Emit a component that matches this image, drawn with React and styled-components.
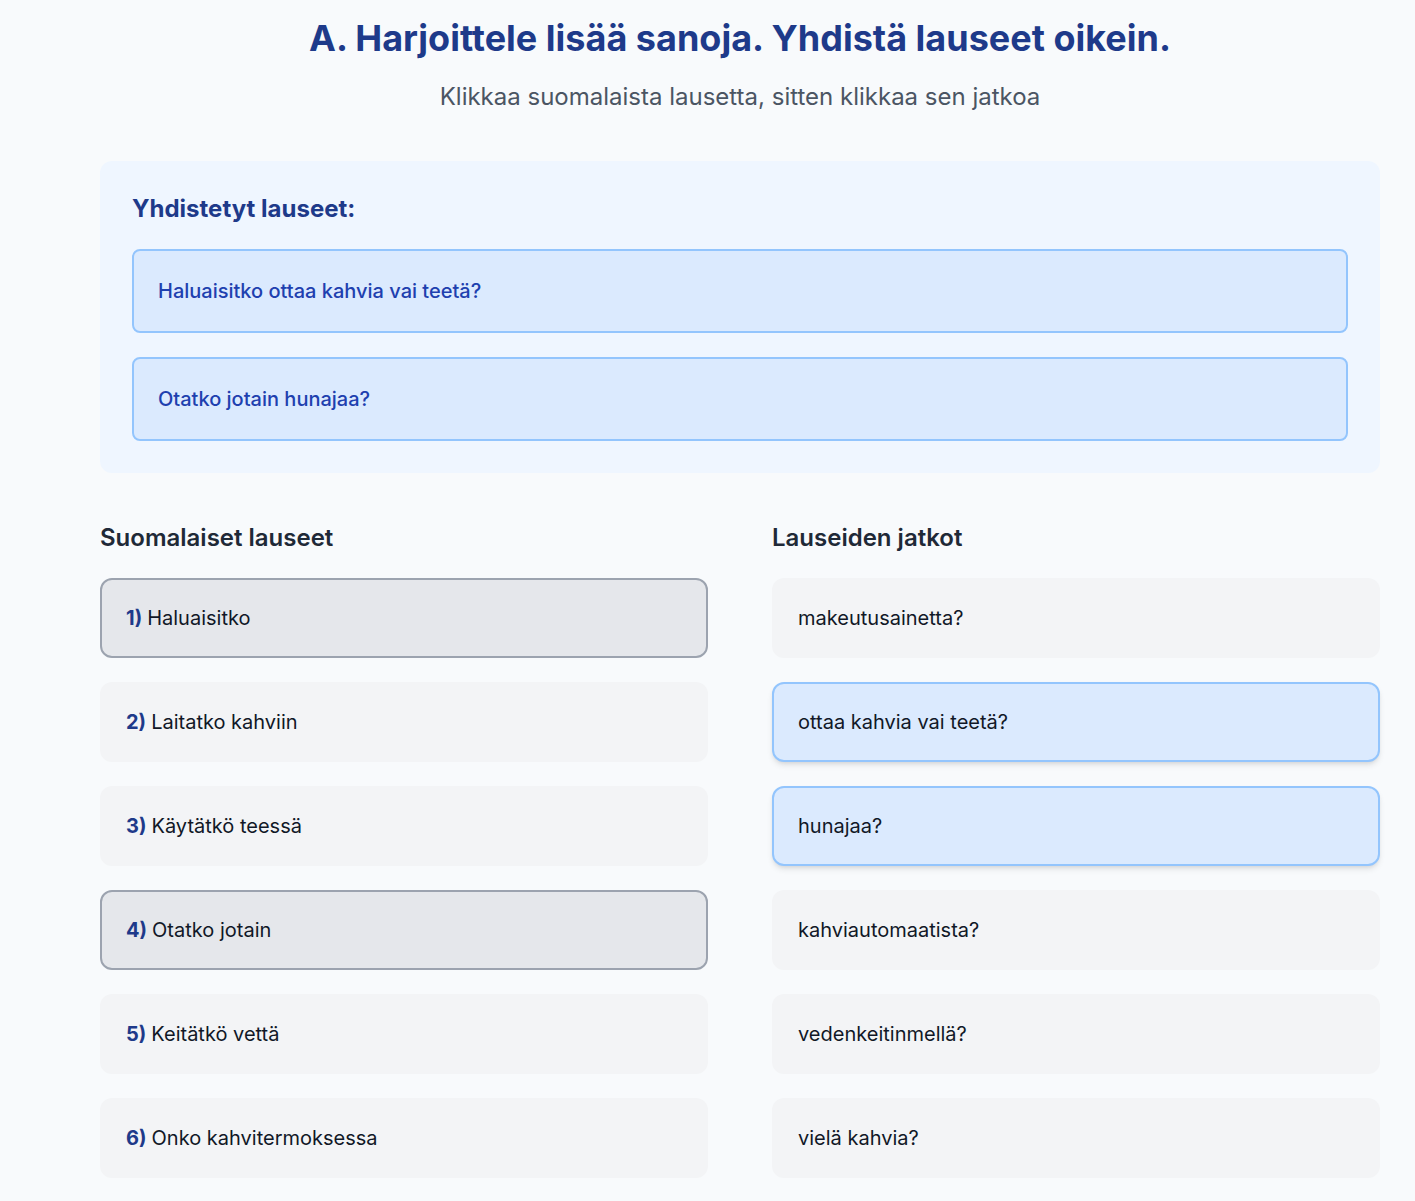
import React from "react";
import styled, { createGlobalStyle } from "styled-components";

const GlobalStyle = createGlobalStyle`
  html, body {
    margin: 0;
    padding: 0;
    background-color: #f8fafc;
    font-family: Inter, "Noto Sans", sans-serif;
  }
`;

const Page = styled.div`
  width: 1280px;
  padding: 18px 0 40px 100px;
`;

const Title = styled.h1`
  margin: 0;
  font-size: 36px;
  line-height: 40px;
  font-weight: 700;
  color: #1e3a8a;
  text-align: center;
`;

const Subtitle = styled.p`
  margin: 23px 0 48px;
  font-size: 24px;
  line-height: 32px;
  color: #4b5563;
  text-align: center;
`;

const MatchedBox = styled.section`
  background-color: #eff6ff;
  border-radius: 12px;
  padding: 32px;
  margin-bottom: 49px;
`;

const BoxHeading = styled.h2`
  margin: 0 0 24px;
  font-size: 24px;
  line-height: 32px;
  font-weight: 700;
  color: #1e3a8a;
`;

const MatchedList = styled.div`
  display: flex;
  flex-direction: column;
  gap: 24px;
`;

const MatchedItem = styled.div`
  background-color: #dbeafe;
  border: 2px solid #93c5fd;
  border-radius: 8px;
  padding: 26px 24px;
  font-size: 20px;
  line-height: 28px;
  font-weight: 500;
  color: #1e40af;
`;

const Columns = styled.div`
  display: grid;
  grid-template-columns: 1fr 1fr;
  gap: 64px;
`;

const ColumnHeading = styled.h3`
  margin: 0 0 24px;
  font-size: 24px;
  line-height: 32px;
  font-weight: 600;
  color: #1f2937;
`;

const ItemList = styled.div`
  display: flex;
  flex-direction: column;
  gap: 24px;
`;

const Item = styled.div`
  border-radius: 12px;
  padding: 24px;
  font-size: 20px;
  line-height: 28px;
  color: #111827;
  border: 2px solid
    ${(p) => (p.$state === "selected" ? "#9ca3af" : p.$state === "matched" ? "#93c5fd" : "transparent")};
  background-color: ${(p) =>
    p.$state === "selected" ? "#e5e7eb" : p.$state === "matched" ? "#dbeafe" : "#f3f4f6"};
  box-shadow: ${(p) =>
    p.$state === "matched" ? "0 4px 6px -1px rgba(0,0,0,0.1), 0 2px 4px -2px rgba(0,0,0,0.1)" : "none"};
`;

const Num = styled.span`
  font-weight: 700;
  color: #1e3a8a;
  margin-right: 5px;
`;

const matched = ["Haluaisitko ottaa kahvia vai teetä?", "Otatko jotain hunajaa?"];

const finnish = [
  { text: "Haluaisitko", state: "selected" },
  { text: "Laitatko kahviin" },
  { text: "Käytätkö teessä" },
  { text: "Otatko jotain", state: "selected" },
  { text: "Keitätkö vettä" },
  { text: "Onko kahvitermoksessa" },
];

const endings = [
  { text: "makeutusainetta?" },
  { text: "ottaa kahvia vai teetä?", state: "matched" },
  { text: "hunajaa?", state: "matched" },
  { text: "kahviautomaatista?" },
  { text: "vedenkeitinmellä?" },
  { text: "vielä kahvia?" },
];

export default function App() {
  return (
    <>
      <GlobalStyle />
      <Page>
        <Title>A. Harjoittele lisää sanoja. Yhdistä lauseet oikein.</Title>
        <Subtitle>Klikkaa suomalaista lausetta, sitten klikkaa sen jatkoa</Subtitle>

        <MatchedBox>
          <BoxHeading>Yhdistetyt lauseet:</BoxHeading>
          <MatchedList>
            {matched.map((m) => (
              <MatchedItem key={m}>{m}</MatchedItem>
            ))}
          </MatchedList>
        </MatchedBox>

        <Columns>
          <div>
            <ColumnHeading>Suomalaiset lauseet</ColumnHeading>
            <ItemList>
              {finnish.map((f, i) => (
                <Item key={f.text} $state={f.state}>
                  <Num>{i + 1})</Num>
                  {f.text}
                </Item>
              ))}
            </ItemList>
          </div>
          <div>
            <ColumnHeading>Lauseiden jatkot</ColumnHeading>
            <ItemList>
              {endings.map((e) => (
                <Item key={e.text} $state={e.state}>
                  {e.text}
                </Item>
              ))}
            </ItemList>
          </div>
        </Columns>
      </Page>
    </>
  );
}
